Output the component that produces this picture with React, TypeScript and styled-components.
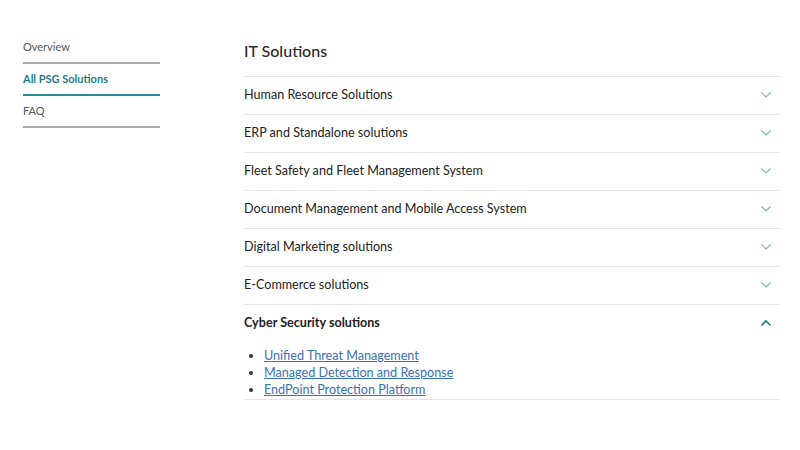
import React, { useState } from 'react';
import styled, { createGlobalStyle } from 'styled-components';

const GlobalStyle = createGlobalStyle`
  html, body {
    margin: 0;
    padding: 0;
    background: #ffffff;
    font-family: 'Lato', 'Noto Sans', sans-serif;
  }
`;

const Page = styled.div`
  display: flex;
  padding: 32px 21px 0 23px;
  gap: 84px;
  width: 800px;
  height: 450px;
  box-sizing: border-box;
`;

const SideNav = styled.nav`
  width: 137px;
  display: flex;
  flex-direction: column;
  flex-shrink: 0;
`;

const NavItem = styled.a<{ $active?: boolean }>`
  display: block;
  font-size: 11px;
  line-height: 14px;
  padding: 8px 0 8px;
  color: ${p => (p.$active ? '#1c7d86' : '#555555')};
  font-weight: ${p => (p.$active ? 700 : 400)};
  border-bottom: 2px solid ${p => (p.$active ? '#2a8a92' : '#a9a9a9')};
  text-decoration: none;
  cursor: pointer;
`;

const Main = styled.main`
  flex: 1;
  display: flex;
  flex-direction: column;
`;

const Title = styled.h2`
  margin: 0;
  padding: 8px 0 15px;
  font-size: 16px;
  line-height: 21px;
  font-weight: 500;
  color: #2b2b2b;
  border-bottom: 1px solid #e6e6e6;
`;

const Item = styled.div`
  border-bottom: 1px solid #e6e6e6;
`;

const Header = styled.button<{ $open?: boolean }>`
  width: 100%;
  height: 37px;
  display: flex;
  align-items: center;
  justify-content: space-between;
  padding: 0 7px 2px 0;
  background: none;
  border: none;
  font-family: inherit;
  font-size: 12.6px;
  color: #222222;
  font-weight: ${p => (p.$open ? 700 : 400)};
  cursor: pointer;
  text-align: left;
`;

const Chevron = styled.svg<{ $open?: boolean }>`
  width: 12px;
  height: 8px;
  color: ${p => (p.$open ? '#1c7d86' : '#6db9c0')};
`;

const LinkList = styled.ul`
  margin: 0;
  padding: 5px 0 1px 20px;
  list-style: disc;
  font-size: 12.6px;
  line-height: 17px;
  color: #333;
`;

const SubLink = styled.a`
  color: #3b6fb6;
  text-decoration: underline;
  cursor: pointer;
`;

const sections: { title: string; links?: string[] }[] = [
  { title: 'Human Resource Solutions' },
  { title: 'ERP and Standalone solutions' },
  { title: 'Fleet Safety and Fleet Management System' },
  { title: 'Document Management and Mobile Access System' },
  { title: 'Digital Marketing solutions' },
  { title: 'E-Commerce solutions' },
  {
    title: 'Cyber Security solutions',
    links: ['Unified Threat Management', 'Managed Detection and Response', 'EndPoint Protection Platform'],
  },
];

const ChevronIcon: React.FC<{ open: boolean }> = ({ open }) => (
  <Chevron $open={open} viewBox="0 0 12 8">
    <path
      d={open ? 'M1.5 6.5 L6 2 L10.5 6.5' : 'M1.5 1.5 L6 6 L10.5 1.5'}
      fill="none"
      stroke="currentColor"
      strokeWidth={open ? 1.6 : 1.2}
    />
  </Chevron>
);

const App: React.FC = () => {
  const [open, setOpen] = useState(6);

  return (
    <>
      <GlobalStyle />
      <Page>
        <SideNav>
          <NavItem>Overview</NavItem>
          <NavItem $active>All PSG Solutions</NavItem>
          <NavItem>FAQ</NavItem>
        </SideNav>
        <Main>
          <Title>IT Solutions</Title>
          {sections.map((s, i) => (
            <Item key={s.title}>
              <Header $open={open === i} onClick={() => setOpen(open === i ? -1 : i)}>
                {s.title}
                <ChevronIcon open={open === i} />
              </Header>
              {open === i && s.links && (
                <LinkList>
                  {s.links.map(l => (
                    <li key={l}>
                      <SubLink>{l}</SubLink>
                    </li>
                  ))}
                </LinkList>
              )}
            </Item>
          ))}
        </Main>
      </Page>
    </>
  );
};

export default App;
